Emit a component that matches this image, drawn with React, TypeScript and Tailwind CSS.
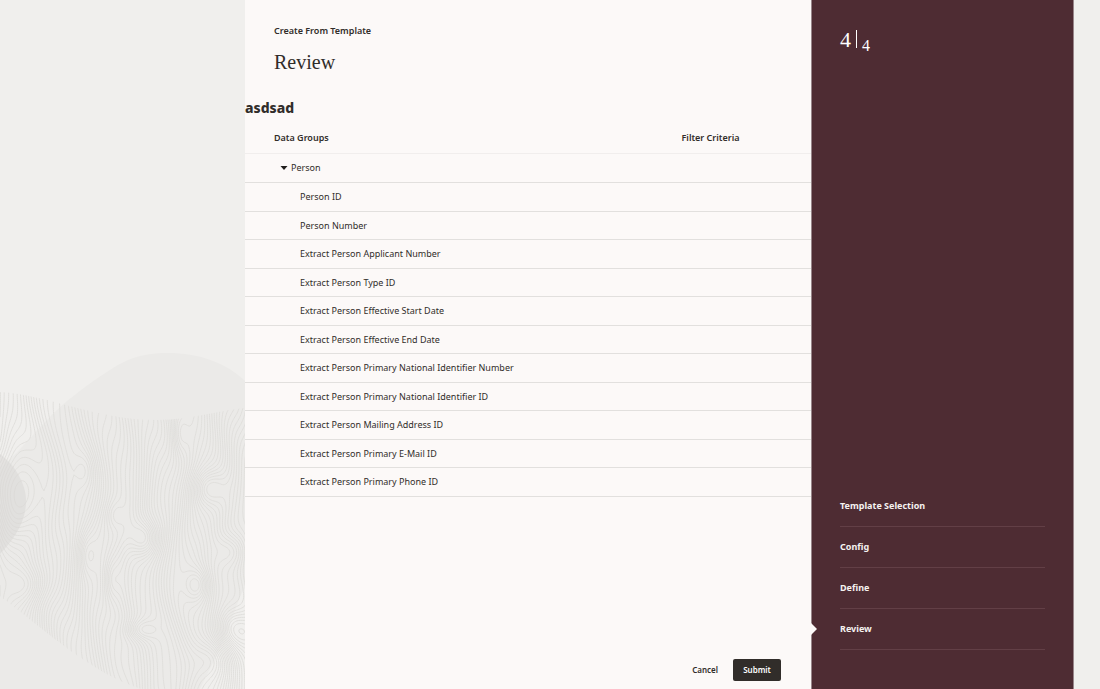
import { clsx } from "clsx";

const fields = [
    "Person ID",
    "Person Number",
    "Extract Person Applicant Number",
    "Extract Person Type ID",
    "Extract Person Effective Start Date",
    "Extract Person Effective End Date",
    "Extract Person Primary National Identifier Number",
    "Extract Person Primary National Identifier ID",
    "Extract Person Mailing Address ID",
    "Extract Person Primary E-Mail ID",
    "Extract Person Primary Phone ID",
];

const steps = ["Template Selection", "Config", "Define", "Review"];

// knots in the wood grain: x, y, strength, radius x, radius y
const knots = [
    [8, 160, 12, 28, 50],
    [144, 198, -8, 14, 18],
    [209, 148, 7, 17, 18],
    [87, 215, 4, 9, 22],
    [198, 245, -6, 12, 16],
    [140, 290, 5, 15, 10],
    [112, 240, 4, 8, 22],
    [30, 245, -5, 18, 18],
    [235, 290, 8, 24, 20],
    [210, 320, -5, 18, 20],
    [180, 95, 4, 8, 20],
    [115, 175, 3, 9, 14],
    [230, 210, -5, 16, 16],
    [85, 130, -3, 10, 18],
];

function height(x: number, y: number) {
    let h = x / 3.4;
    h += 2.2 * Math.sin(y / 45 + x / 60) + 0.6 * Math.sin(y / 17 - x / 23);
    h += 0.8 * Math.sin(x / 7 + Math.sin(y / 30) * 2);
    for (const [kx, ky, s, rx, ry] of knots) {
        h += s * Math.exp(-(((x - kx) / rx) ** 2) - ((y - ky) / ry) ** 2);
    }
    return h;
}

// marching triangles over a small grid, one segment per crossed level
function grain() {
    const step = 2;
    const parts: string[] = [];
    const triangle = (pts: number[][]) => {
        const lo = Math.ceil(Math.min(...pts.map((p) => p[2])));
        const hi = Math.max(...pts.map((p) => p[2]));
        for (let level = lo; level < hi; level++) {
            const cuts: string[] = [];
            for (let i = 0; i < 3; i++) {
                const a = pts[i];
                const b = pts[(i + 1) % 3];
                if (a[2] < level !== b[2] < level) {
                    const t = (level - a[2]) / (b[2] - a[2]);
                    cuts.push(`${(a[0] + (b[0] - a[0]) * t).toFixed(1)} ${(a[1] + (b[1] - a[1]) * t).toFixed(1)}`);
                }
            }
            if (cuts.length === 2) parts.push(`M${cuts[0]}L${cuts[1]}`);
        }
    };
    for (let y = 48; y < 350; y += step) {
        for (let x = 0; x < 246; x += step) {
            const p = [[x, y], [x + step, y], [x + step, y + step], [x, y + step]].map(([px, py]) => [px, py, height(px, py)]);
            triangle([p[0], p[1], p[2]]);
            triangle([p[0], p[2], p[3]]);
        }
    }
    return parts.join("");
}

const grainPath = grain();

function Backdrop() {
    return (
        <svg width="245" height="349" viewBox="0 0 245 349" className="shrink-0" aria-hidden="true">
            <defs>
                <clipPath id="wood">
                    <path d="M0 52C50 55 95 80 157 80C190 80 220 70 245 68V349H141C90 332 50 294 0 256Z" />
                </clipPath>
            </defs>
            <path d="M245 41C225 22 198 13 168 13C140 13 125 20 110 30C85 46 62 64 48 79C34 93 23 107 13 116L0 130V349H200C207 334 220 310 228 290C236 268 239 256 245 248Z" fill="#ebeae8" />
            <g clipPath="url(#wood)">
                <path d={grainPath} fill="none" stroke="#e0dfdc" strokeWidth="1" />
            </g>
            <path d="M0 114C14 124 26 143 26 161C26 183 13 200 0 214Z" fill="#d8d6d3" fillOpacity="0.5" />
        </svg>
    );
}

function DataGroups() {
    return (
        <table className="w-full table-fixed border-collapse text-left text-[9px] leading-3">
            <thead>
                <tr className="h-[29px] border-b border-[#f1eeed]">
                    <th className="w-[72%] pl-[29px] font-semibold">Data Groups</th>
                    <th className="pl-[29px] font-semibold">Filter Criteria</th>
                </tr>
            </thead>
            <tbody>
                <tr className="h-[29px] border-b border-[#e2e0de]">
                    <td className="pt-px pl-[35px]">
                        <button type="button" aria-expanded="true" className="flex items-center gap-[3px]">
                            <svg width="8" height="4" viewBox="0 0 8 4" fill="#201e1c" aria-hidden="true">
                                <path d="M0.5 0h7L4 4z" />
                            </svg>
                            Person
                        </button>
                    </td>
                    <td></td>
                </tr>
                {fields.map((field) => (
                    <tr key={field} className="border-b border-[#e2e0de] even:h-[29px] odd:h-[28px]">
                        <td className="pt-px pl-[55px]">{field}</td>
                        <td></td>
                    </tr>
                ))}
            </tbody>
        </table>
    );
}

function StepPanel() {
    return (
        <aside className="flex w-[263px] shrink-0 flex-col border-x border-[#98868a] bg-[#4e2c33] px-7 text-[#f5f2f0]">
            <div className="mt-7 flex font-['Liberation_Serif',serif] text-white">
                <span className="text-[22px] leading-6">4</span>
                <span className="mx-[5px] mt-0.5 h-[18px] w-px bg-white"></span>
                <span className="mt-2 text-base leading-5">4</span>
            </div>
            <ol className="mt-auto mb-[39px] text-[9px] leading-3 font-bold">
                {steps.map((step) => (
                    <li
                        key={step}
                        aria-current={step === "Review" ? "step" : undefined}
                        className={clsx("flex h-[41px] items-center border-b border-[#623f46]", step === "Review" && "relative")}
                    >
                        {step === "Review" && (
                            <svg width="6" height="12" viewBox="0 0 6 12" fill="#fcf9f8" className="absolute -left-[29px]" aria-hidden="true">
                                <path d="M0 0L6 6L0 12z" />
                            </svg>
                        )}
                        {step}
                    </li>
                ))}
            </ol>
        </aside>
    );
}

export default function App() {
    return (
        <div className="flex min-h-screen bg-[#f0efed] font-['Noto_Sans',sans-serif] text-[#312d2a]">
            <div className="flex w-[245px] shrink-0 items-end overflow-hidden">
                <Backdrop />
            </div>
            <main className="flex min-w-0 flex-1 flex-col bg-[#fcf9f8]">
                <header className="px-[29px] pt-[25px]">
                    <p className="text-[9px] leading-3 font-semibold">Create From Template</p>
                    <h1 className="mt-[13px] font-['Liberation_Serif',serif] text-xl leading-6">Review</h1>
                </header>
                <h2 className="mt-6 mb-1.5 text-sm leading-5 font-extrabold">asdsad</h2>
                <DataGroups />
                <footer className="mt-auto flex justify-end gap-[15px] pr-[30px] pb-2 text-[8px] leading-3 font-semibold">
                    <button type="button">Cancel</button>
                    <button type="button" className="h-[22px] w-12 rounded-xs bg-[#312d2a] text-white">Submit</button>
                </footer>
            </main>
            <StepPanel />
            <div className="w-[26px] shrink-0"></div>
        </div>
    );
}
